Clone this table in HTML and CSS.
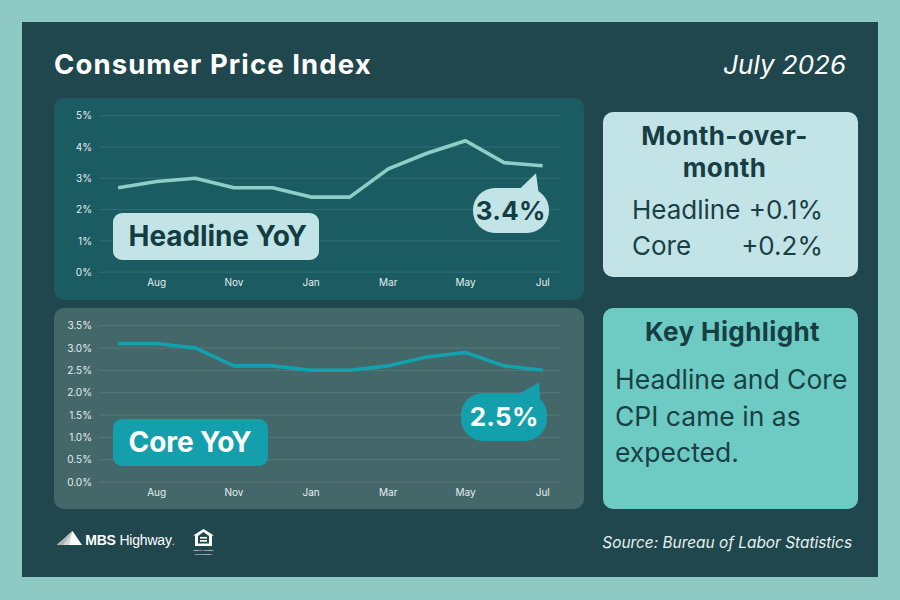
FILE: index.html
```html
<!DOCTYPE html>
<html lang="en">
<head>
<meta charset="utf-8">
<title>Consumer Price Index</title>
<link rel="stylesheet" href="styles.css">
</head>
<body>
<div class="panel">
  <header class="header">
    <h1 class="title">Consumer Price Index</h1>
    <div class="date">July 2026</div>
  </header>

  <main class="grid">
    <section class="chart chart-headline">
      <svg class="chart-svg" viewBox="0 0 530 202" width="530" height="202">
        <g class="gridlines">
          <line x1="45" x2="507" y1="17.7" y2="17.7"/>
          <line x1="45" x2="507" y1="49" y2="49"/>
          <line x1="45" x2="507" y1="80.3" y2="80.3"/>
          <line x1="45" x2="507" y1="111.6" y2="111.6"/>
          <line x1="45" x2="507" y1="142.9" y2="142.9"/>
          <line x1="45" x2="507" y1="174.2" y2="174.2"/>
        </g>
        <g class="ylabels">
          <text x="38" y="21.3">5%</text>
          <text x="38" y="52.6">4%</text>
          <text x="38" y="83.9">3%</text>
          <text x="38" y="115.2">2%</text>
          <text x="38" y="146.5">1%</text>
          <text x="38" y="177.8">0%</text>
        </g>
        <g class="xlabels">
          <text x="102.7" y="188">Aug</text>
          <text x="179.9" y="188">Nov</text>
          <text x="257.1" y="188">Jan</text>
          <text x="334.3" y="188">Mar</text>
          <text x="411.5" y="188">May</text>
          <text x="488.7" y="188">Jul</text>
        </g>
        <polyline class="series series-headline" points="64.1,89.69 102.7,83.43 141.3,80.3 179.9,89.69 218.5,89.69 257.1,99.08 295.7,99.08 334.3,70.91 372.9,55.26 411.5,42.74 450.1,64.65 488.7,67.78"/>
      </svg>
      <div class="tag tag-headline">Headline YoY</div>
      <div class="bubble bubble-headline">3.4%</div>
    </section>

    <aside class="card card-mom">
      <h2 class="card-title mom-title">Month-over-month</h2>
      <div class="mom-rows">
        <span>Headline</span><span class="val">+0.1%</span>
        <span>Core</span><span class="val">+0.2%</span>
      </div>
    </aside>

    <section class="chart chart-core">
      <svg class="chart-svg" viewBox="0 0 530 201" width="530" height="201">
        <g class="gridlines">
          <line x1="45" x2="507" y1="17.7" y2="17.7"/>
          <line x1="45" x2="507" y1="40.03" y2="40.03"/>
          <line x1="45" x2="507" y1="62.36" y2="62.36"/>
          <line x1="45" x2="507" y1="84.69" y2="84.69"/>
          <line x1="45" x2="507" y1="107.02" y2="107.02"/>
          <line x1="45" x2="507" y1="129.35" y2="129.35"/>
          <line x1="45" x2="507" y1="151.68" y2="151.68"/>
          <line x1="45" x2="507" y1="174" y2="174"/>
        </g>
        <g class="ylabels">
          <text x="38" y="21.3">3.5%</text>
          <text x="38" y="43.6">3.0%</text>
          <text x="38" y="66">2.5%</text>
          <text x="38" y="88.3">2.0%</text>
          <text x="38" y="110.6">1.5%</text>
          <text x="38" y="133">1.0%</text>
          <text x="38" y="155.3">0.5%</text>
          <text x="38" y="177.6">0.0%</text>
        </g>
        <g class="xlabels">
          <text x="102.7" y="188">Aug</text>
          <text x="179.9" y="188">Nov</text>
          <text x="257.1" y="188">Jan</text>
          <text x="334.3" y="188">Mar</text>
          <text x="411.5" y="188">May</text>
          <text x="488.7" y="188">Jul</text>
        </g>
        <polyline class="series series-core" points="64.1,35.52 102.7,35.52 141.3,39.99 179.9,57.86 218.5,57.86 257.1,62.32 295.7,62.32 334.3,57.86 372.9,48.92 411.5,44.46 450.1,57.86 488.7,62.32"/>
      </svg>
      <div class="tag tag-core">Core YoY</div>
      <div class="bubble bubble-core">2.5%</div>
    </section>

    <aside class="card card-key">
      <h2 class="card-title">Key Highlight</h2>
      <p class="key-text">Headline and Core CPI came in as expected.</p>
    </aside>
  </main>

  <footer class="footer">
    <div class="brand">
      <div class="mbs">
        <svg class="mbs-mark" viewBox="0 0 25 14" width="25" height="14">
          <polygon points="0,14 15.6,0 25,14" fill="#ffffff"/>
          <polygon points="0,14 15.6,0 12,14" fill="#d3d9db"/>
          <polygon points="0,14 15.6,0 6,14" fill="#aab3b6"/>
        </svg>
        <span class="mbs-text"><b>MBS</b> Highway<span class="dot">.</span></span>
      </div>
      <svg class="eho" viewBox="0 0 21 27" width="21" height="27">
        <path fill="#ffffff" fill-rule="evenodd" d="M10.5 0 L21 6.6 L19 6.6 L19 17 L2 17 L2 6.6 L0 6.6 Z M10.5 3.1 L16 6.9 L16 14.6 L5 14.6 L5 6.9 Z"/>
        <rect x="7" y="7.9" width="7" height="1.7" fill="#ffffff"/>
        <rect x="7" y="11" width="7" height="1.7" fill="#ffffff"/>
        <text x="10.5" y="22" class="eho-text">EQUAL HOUSING</text>
        <text x="10.5" y="25.5" class="eho-text">OPPORTUNITY</text>
      </svg>
    </div>
    <div class="source">Source: Bureau of Labor Statistics</div>
  </footer>
</div>
</body>
</html>
```

FILE: styles.css
```css
* { box-sizing: border-box; }

html, body {
  margin: 0;
  padding: 0;
}

body {
  width: 900px;
  height: 600px;
  background: #8ecac3;
  font-family: Inter, "Noto Sans", "Liberation Sans", sans-serif;
  padding: 22px;
}

.panel {
  width: 856px;
  height: 555px;
  background: #1f474d;
  padding: 26px 20px 0 32px;
  display: flex;
  flex-direction: column;
}

.header {
  display: flex;
  justify-content: space-between;
  align-items: baseline;
  height: 32px;
}

.title {
  margin: 0;
  font-size: 27.5px;
  line-height: 32px;
  font-weight: 700;
  color: #ffffff;
  letter-spacing: 1.1px;
}

.date {
  font-size: 26px;
  line-height: 32px;
  font-style: italic;
  color: #ffffff;
  padding-right: 12px;
}

.grid {
  margin-top: 18px;
  display: grid;
  grid-template-columns: 530px 255px;
  grid-template-rows: 202px 201px;
  column-gap: 19px;
  row-gap: 8px;
}

.chart {
  position: relative;
  border-radius: 10px;
}

.chart-headline { background: #1b5c63; }
.chart-core { background: #44686a; }

.chart-svg {
  display: block;
}

.gridlines line {
  stroke: rgba(255, 255, 255, 0.1);
  stroke-width: 1;
}

.ylabels text {
  font-family: Inter, "Noto Sans", sans-serif;
  font-size: 10px;
  fill: #e3eeee;
  text-anchor: end;
}

.xlabels text {
  font-family: Inter, "Noto Sans", sans-serif;
  font-size: 10px;
  fill: #e3eeee;
  text-anchor: middle;
}

.series {
  fill: none;
  stroke-width: 3.6;
  stroke-linejoin: round;
}

.series-headline { stroke: #8dcfc6; }
.series-core { stroke: #12a1ae; }

.tag {
  position: absolute;
  left: 58.6px;
  height: 47px;
  border-radius: 9px;
  font-size: 28px;
  font-weight: 700;
  line-height: 47px;
  padding-left: 16px;
  letter-spacing: -0.1px;
}

.tag-headline {
  top: 115px;
  width: 206px;
  background: #c2e4e7;
  color: #143d42;
}

.tag-core {
  top: 111px;
  width: 155px;
  background: #149fac;
  color: #ffffff;
}

.bubble {
  position: absolute;
  border-radius: 22px;
  font-size: 26px;
  font-weight: 700;
  text-align: center;
  letter-spacing: 0.3px;
}

.bubble::before {
  content: "";
  position: absolute;
  background: inherit;
}

.bubble-headline {
  left: 418.6px;
  top: 89.7px;
  width: 76.4px;
  height: 45.6px;
  line-height: 45.6px;
  background: #c2e4e7;
  color: #143d42;
}

.bubble-headline::before {
  left: 47px;
  top: -15px;
  width: 20px;
  height: 20px;
  clip-path: polygon(0% 82%, 82% 3%, 95% 98%);
}

.bubble-core {
  left: 407.2px;
  top: 85.3px;
  width: 86px;
  height: 47.7px;
  line-height: 47.7px;
  background: #149fac;
  color: #ffffff;
}

.bubble-core::before {
  left: 58px;
  top: -12px;
  width: 22px;
  height: 22px;
  clip-path: polygon(2% 55%, 91% 5%, 96% 93%);
}

.card {
  border-radius: 10px;
  color: #1a3f44;
}

.card-title {
  margin: 0;
  font-size: 26px;
  line-height: 32px;
  font-weight: 700;
  letter-spacing: 0.4px;
  text-align: center;
  color: #163e43;
}

.card-mom {
  background: #c2e4e7;
  align-self: start;
  margin-top: 14px;
  padding: 8px 20px 13px 20px;
}

.mom-title {
  padding: 0 26px 0 14px;
}

.mom-rows {
  margin-top: 8px;
  margin-left: 9px;
  width: 191px;
  display: grid;
  grid-template-columns: auto auto;
  justify-content: space-between;
  font-size: 26px;
  line-height: 36px;
}

.mom-rows .val {
  text-align: right;
}

.card-key {
  background: #6dcbc4;
  padding: 8px 8px 0 12px;
}

.key-text {
  margin: 13px 0 0 0;
  font-size: 26.5px;
  line-height: 36.7px;
  color: #1a3f44;
}

.footer {
  margin-top: 21px;
  display: flex;
  justify-content: space-between;
  align-items: flex-start;
}

.brand {
  display: flex;
  align-items: flex-start;
  margin-left: 2.7px;
}

.mbs {
  display: flex;
  align-items: flex-end;
  margin-top: 1px;
}

.mbs-mark {
  display: block;
}

.mbs-text {
  margin-left: 3.5px;
  margin-bottom: -1.5px;
  font-family: "Liberation Sans", Arial, sans-serif;
  font-size: 14px;
  line-height: 1;
  color: #ffffff;
  letter-spacing: -0.2px;
}

.mbs-text b {
  font-weight: 700;
}

.mbs-text .dot {
  font-size: 10px;
}

.eho {
  display: block;
  margin-left: 19px;
  margin-top: -1px;
}

.eho-text {
  font-family: "Liberation Sans", Arial, sans-serif;
  font-size: 2.4px;
  font-weight: 700;
  fill: #ffffff;
  text-anchor: middle;
}

.source {
  margin-top: 4px;
  padding-right: 6px;
  font-size: 15.4px;
  line-height: 18px;
  font-style: italic;
  color: #e6f1f1;
}
```
